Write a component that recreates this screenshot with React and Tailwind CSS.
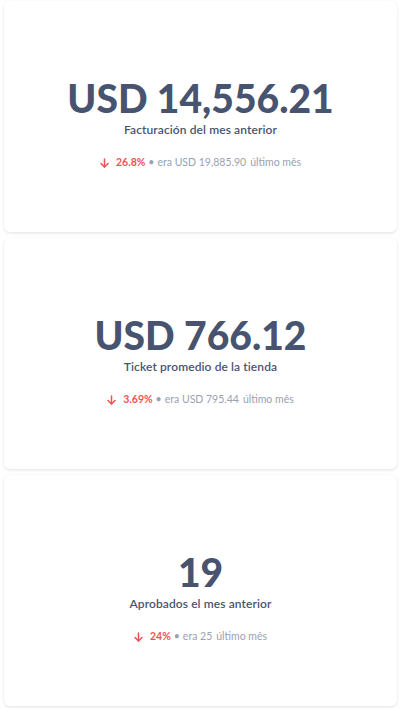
import React from 'react';

const stats = [
  { value: 'USD 14,556.21', label: 'Facturación del mes anterior', pct: '26.8%', prev: 'USD 19,885.90' },
  { value: 'USD 766.12', label: 'Ticket promedio de la tienda', pct: '3.69%', prev: 'USD 795.44' },
  { value: '19', label: 'Aprobados el mes anterior', pct: '24%', prev: '25' },
];

const ArrowDown = () => (
  <svg width="9" height="10" viewBox="0 0 9 10" fill="none" stroke="#f05252" strokeWidth="1.5" strokeLinecap="round" strokeLinejoin="round">
    <path d="M4.5 1v8" />
    <path d="M1 5.5 4.5 9 8 5.5" />
  </svg>
);

const StatCard = ({ stat }) => (
  <div className="h-[231px] bg-white rounded-md shadow-[0_1px_3px_rgba(0,0,0,0.12)] flex flex-col items-center justify-center pt-[17px]">
    <div className="text-[39px] leading-none font-black text-[#48536f]">{stat.value}</div>
    <div className="mt-[3px] text-[12px] font-semibold text-[#4a5470] tracking-[0.1px]">{stat.label}</div>
    <div className="mt-[16px] flex items-center text-[10.5px] text-[#9aa1b1]">
      <ArrowDown />
      <span className="ml-[7px] font-bold text-[#f05252]">{stat.pct}</span>
      <span className="ml-[3px]">•</span>
      <span className="ml-[3px]">era {stat.prev}</span>
      <span className="ml-[4px]">último mês</span>
    </div>
  </div>
);

export default function App() {
  return (
    <div className="min-h-[709px] bg-white px-1 pt-px pb-1 flex flex-col gap-[6px]" style={{ fontFamily: 'Lato, "Noto Sans", sans-serif' }}>
      {stats.map((s) => (
        <StatCard key={s.label} stat={s} />
      ))}
    </div>
  );
}
